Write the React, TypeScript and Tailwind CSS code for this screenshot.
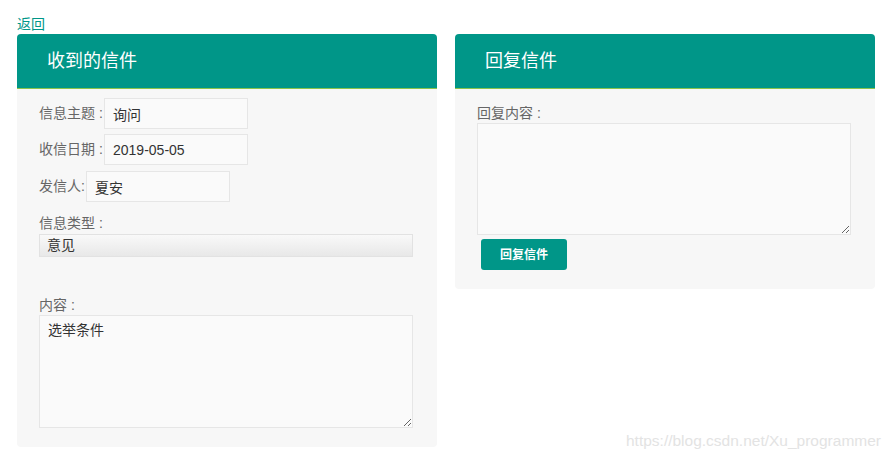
export default function App() {
  const font = { fontFamily: '"Liberation Sans", "Noto Sans CJK SC", sans-serif' };

  return (
    <div
      className="relative min-h-[456px] bg-white pl-[17px] pt-[14px] text-[14px] text-[#666]"
      style={font}
    >
      <a href="#" className="block h-[20px] leading-[20px] text-[#009688]">
        返回
      </a>

      <div className="flex items-start gap-[18px]">
        {/* 收到的信件 */}
        <div className="w-[420px] overflow-hidden rounded-[4px] bg-[#f7f7f7]">
          <div className="flex h-[55px] items-center border-b border-[#8bc34a] bg-[#009688] pl-[30px] pt-[1px] text-[18px] text-white">
            收到的信件
          </div>
          <div className="pl-[22px] pr-[24px] pt-[9px] pb-[19px]">
            <div className="flex items-center">
              <span className="w-[65px] whitespace-nowrap">信息主题 :</span>
              <input
                readOnly
                defaultValue="询问"
                className="h-[31px] w-[144px] border border-[#e6e6e6] bg-[#fafafa] px-[8px] text-[#333] outline-none"
              />
            </div>
            <div className="mt-[5px] flex items-center">
              <span className="w-[65px] whitespace-nowrap">收信日期 :</span>
              <input
                readOnly
                defaultValue="2019-05-05"
                className="h-[31px] w-[144px] border border-[#e6e6e6] bg-[#fafafa] px-[8px] text-[#333] outline-none"
              />
            </div>
            <div className="mt-[6px] flex items-center">
              <span className="w-[47px] whitespace-nowrap">发信人:</span>
              <input
                readOnly
                defaultValue="夏安"
                className="h-[31px] w-[144px] border border-[#e6e6e6] bg-[#fafafa] px-[8px] text-[#333] outline-none"
              />
            </div>

            <div className="mt-[11px] h-[21px] leading-[20px]">信息类型 :</div>
            <div className="flex h-[23px] w-[374px] items-center border border-[#e2e2e2] bg-gradient-to-b from-[#f9f9f9] to-[#e8e8e8] pl-[7px] text-[#333]">
              意见
            </div>

            <div className="mt-[38px] h-[20px] leading-[20px]">内容 :</div>
            <textarea
              readOnly
              defaultValue="选举条件"
              className="block h-[113px] w-[374px] border border-[#e6e6e6] bg-[#fafafa] px-[8px] py-[4px] text-[#333] outline-none"
            />
          </div>
        </div>

        {/* 回复信件 */}
        <div className="w-[420px] overflow-hidden rounded-[4px] bg-[#f7f7f7]">
          <div className="flex h-[55px] items-center border-b border-[#8bc34a] bg-[#009688] pl-[30px] pt-[1px] text-[18px] text-white">
            回复信件
          </div>
          <div className="pl-[22px] pr-[24px] pt-[14px] pb-[19px]">
            <div className="h-[20px] leading-[20px]">回复内容 :</div>
            <textarea
              readOnly
              className="block h-[112px] w-[374px] border border-[#e6e6e6] bg-[#fafafa] px-[8px] py-[4px] text-[#333] outline-none"
            />
            <button className="mt-[4px] ml-[4px] h-[31px] w-[86px] rounded-[3px] bg-[#009688] text-[12px] font-bold text-white">
              回复信件
            </button>
          </div>
        </div>
      </div>

      <div className="absolute right-[12px] top-[429px] text-[15.5px] text-[#e3e3e3]">
        https://blog.csdn.net/Xu_programmer
      </div>
    </div>
  );
}
